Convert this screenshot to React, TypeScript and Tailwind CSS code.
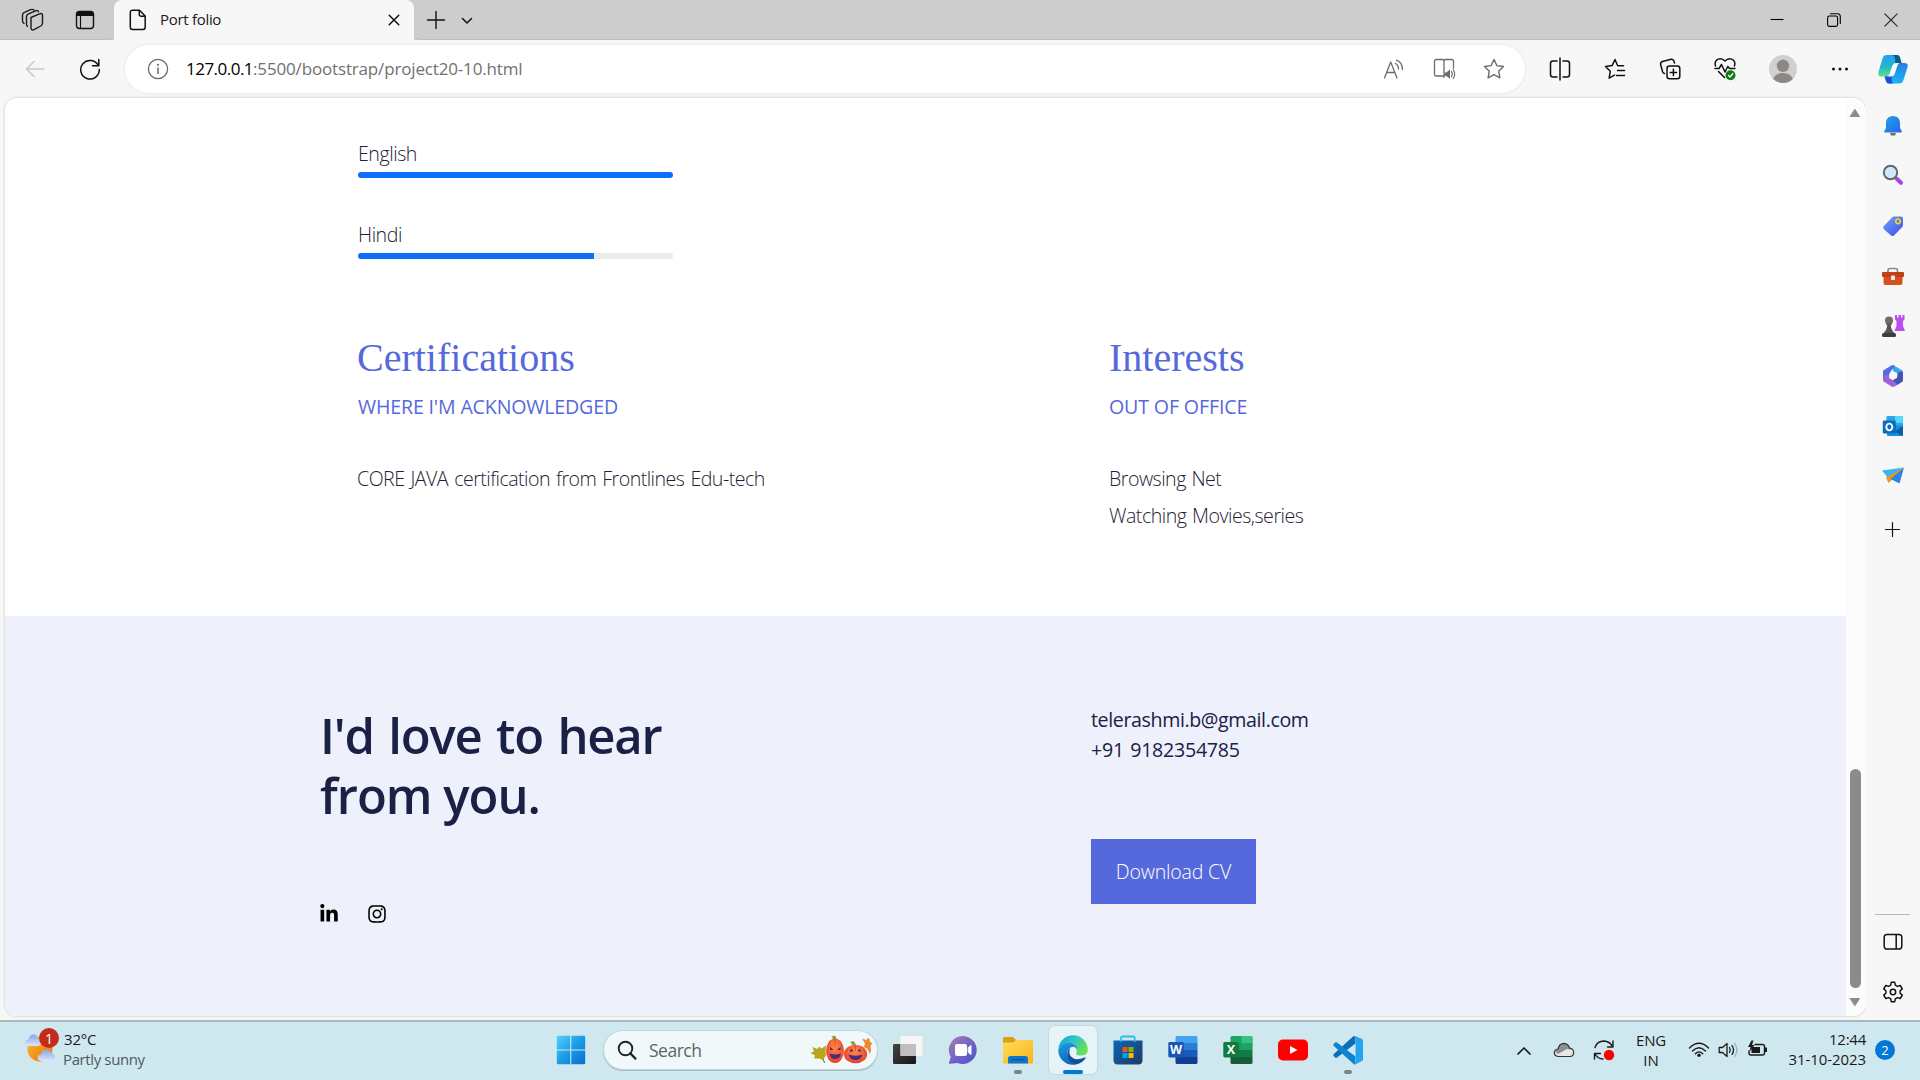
import React from "react";
import { FaInstagram, FaLinkedinIn } from "react-icons/fa";

type SvgProps = { w: number; h: number; className?: string; children: React.ReactNode };

/* Drawing surface whose user units equal CSS pixels. */
function Svg({ w, h, className = "", children }: SvgProps) {
  return (
    <svg
      width={w}
      height={h}
      viewBox={`0 0 ${w} ${h}`}
      fill="none"
      stroke="none"
      strokeLinecap="round"
      strokeLinejoin="round"
      className={"block shrink-0 " + className}
    >
      {children}
    </svg>
  );
}

/* ---------- Browser chrome ---------- */

function TabStrip() {
  return (
    <div className="flex h-10 shrink-0 items-stretch bg-[#cdcdcd] text-black">
      <div className="flex h-10 w-[114px] items-center rounded-br-md border-b border-[#bdbdbd] pl-[21px]">
        <Svg w={24} h={24}>
          <g stroke="#1b1b1b" strokeWidth="1.4">
            <path d="M10 9.500 18.500 5.800Q21.500 4.600 21.500 7.600V15Q21.500 17 19.800 18L13 21.600Q10 22.800 10 19.800Z" />
            <path d="M6.500 18.400Q5.500 17.700 5.500 16V8.800Q5.500 7 7 6.200L14.500 2.800Q17 2 17.500 3.700" />
            <path d="M3 15.400Q1.500 14.600 1.500 12.800V7.200Q1.500 5.400 3 4.600L9.500 1.600Q12 .9 13 2" />
          </g>
        </Svg>
        <Svg w={20} h={20} className="ml-[30px]">
          <rect x="1.500" y="1.500" width="17" height="17" rx="3" stroke="#111" strokeWidth="1.400" />
          <path d="M1.500 6V4.500a3 3 0 0 1 3-3h11a3 3 0 0 1 3 3V6Z" fill="#111" />
          <path d="M5.500 6v12.500" stroke="#111" strokeWidth="1.200" />
        </Svg>
      </div>
      <div className="flex h-10 w-[300px] items-center rounded-t-lg bg-[#f7f7f7]">
        <Svg w={18} h={22} className="ml-[15px]">
          <path
            d="M3.500 1.200H10.500L16.200 7V18.200A2.200 2.200 0 0 1 14 20.400H3.500A2.200 2.200 0 0 1 1.300 18.200V3.400A2.200 2.200 0 0 1 3.500 1.200ZM10.300 1.200V5.500A1.700 1.700 0 0 0 12 7.200H16.200"
            stroke="#111"
            strokeWidth="1.500"
          />
        </Svg>
        <span className="-mt-[2px] ml-[13px] w-[228px] text-[15px] leading-5 tracking-[-0.3px] text-[#1a1a1a]">Port folio</span>
        <Svg w={12} h={12}>
          <path d="M1.200 1.200 10.800 10.800M10.800 1.200 1.200 10.800" stroke="#111" strokeWidth="1.500" />
        </Svg>
      </div>
      <div className="flex h-10 flex-1 items-center rounded-bl-md border-b border-[#bdbdbd] pl-[12px]">
        <Svg w={20} h={20}>
          <path d="M10 1.500V18.500M1.500 10H18.500" stroke="#111" strokeWidth="1.400" />
        </Svg>
        <Svg w={12} h={8} className="mt-[2px] ml-[15px]">
          <path d="M1.500 1.500 6 6 10.500 1.500" stroke="#111" strokeWidth="1.500" />
        </Svg>
        <div className="flex-1" />
        <Svg w={14} h={14} className="mr-[43px]">
          <path d="M.5 6.500H13.500" stroke="#000" strokeWidth="1.100" strokeLinecap="butt" />
        </Svg>
        <Svg w={14} h={14} className="mr-[43px]">
          <rect x=".6" y="3" width="10" height="10.400" rx="1.800" stroke="#000" strokeWidth="1.100" />
          <path d="M3.500 .8H10.500Q13.300 .8 13.300 3.600V10.500" stroke="#000" strokeWidth="1.100" />
        </Svg>
        <Svg w={14} h={14} className="mr-[22px]">
          <path d="M.8 .8 13.200 13.200M13.200 .8 .8 13.200" stroke="#222" strokeWidth="1.100" />
        </Svg>
      </div>
    </div>
  );
}

function Cell({ className, children }: { className: string; children: React.ReactNode }) {
  return <div className={"flex shrink-0 items-center justify-center " + className}>{children}</div>;
}

function CopilotLogo() {
  return (
    <Svg w={30} h={30}>
      <defs>
        <linearGradient id="cpA" x1="0" y1="0" x2="0" y2="1">
          <stop offset="0" stopColor="#2a9ff0" />
          <stop offset=".55" stopColor="#22b8c9" />
          <stop offset="1" stopColor="#5fe08a" />
        </linearGradient>
        <linearGradient id="cpB" x1="0" y1="0" x2="0" y2="1">
          <stop offset="0" stopColor="#2a7de8" />
          <stop offset="1" stopColor="#1bb7f3" />
        </linearGradient>
      </defs>
      <path d="M8.500 1H19Q21 1 21.800 3L23.500 9H16.500L12 19.500Q11 22.500 8 22.500H3.500Q-.8 22.500 .6 17.500L4.500 4.500Q5.500 1 8.500 1Z" fill="url(#cpA)" />
      <path d="M14 1H19Q21 1 21.800 3L23.500 9H17Q18 1.500 14 1Z" fill="#0b5c8f" />
      <path d="M21.500 29.500H11Q8.500 29.500 8 27L6.500 22.500H10.500Q13 22 14 19L17.500 9H26.500Q30.800 9 29.400 13.500L25.500 26Q24.500 29.500 21.500 29.500Z" fill="url(#cpB)" />
      <path d="M6.500 22.500H10.500Q13 22 14 19.500Q13 27 15 29.500H11Q8.500 29.500 8 27Z" fill="#1d4fd8" />
      <path d="M19.500 9Q15 9 14 12.500L11.500 20.500Q11 22 10 22.500H12.500Q16 22.500 17 19L19.500 11.500Q20 9.500 21.500 9Z" fill="#f4fbff" />
    </Svg>
  );
}

function Toolbar() {
  return (
    <div className="flex h-[57px] shrink-0 items-center bg-[#f7f7f7]">
      <Svg w={20} h={18} className="ml-[25px]">
        <path d="M19 9H1.500M9 1.500 1.500 9 9 16.500" stroke="#c6c6c6" strokeWidth="1.400" />
      </Svg>
      <Svg w={22} h={22} className="ml-[34px]">
        <path d="M19.300 7.500A9.300 9.300 0 1 0 20.300 11.500M19.800 1.500V7.800H13.500" stroke="#111" strokeWidth="1.500" />
      </Svg>
      <div className="ml-[24px] flex h-[48px] w-[1400px] shrink-0 items-center rounded-full bg-white shadow-[0_0_3px_rgba(0,0,0,0.10)]">
        <Svg w={22} h={22} className="ml-[22px]">
          <circle cx="11" cy="11" r="9.600" stroke="#6b6b6b" strokeWidth="1.300" />
          <path d="M11 10V15.500" stroke="#6b6b6b" strokeWidth="1.500" />
          <circle cx="11" cy="6.800" r="1.100" fill="#6b6b6b" />
        </Svg>
        <div className="ml-[17px] flex-1 whitespace-nowrap text-[17px] leading-6">
          <span className="tracking-[-0.52px] text-black">127.0.0.1</span>
          <span className="tracking-[-0.16px] text-[#707070]">:5500/bootstrap/project20-10.html</span>
        </div>
        <Cell className="w-[50px]">
          <Svg w={22} h={20}>
            <g stroke="#6b6b6b" strokeWidth="1.300">
              <path d="M1.500 19 7.700 3 14 19M3.600 13.500H11.900" />
              <path d="M12.500 4.500Q15.500 6 15.500 10M13.500 1.200Q19.500 3.500 19.500 10.500" />
            </g>
          </Svg>
        </Cell>
        <Cell className="w-[50px]">
          <Svg w={23} h={22}>
            <path d="M11 18H3.200A1.700 1.700 0 0 1 1.500 16.300V3.200A1.700 1.700 0 0 1 3.200 1.500H9.500Q11 1.500 11 3.200V19.500M11 3.200Q11 1.500 12.700 1.500H18.800A1.700 1.700 0 0 1 20.500 3.200V10" stroke="#6b6b6b" strokeWidth="1.300" />
            <path d="M11.500 14.500H13.300L17 11.500V20.800L13.300 18H11.500Z" fill="#6b6b6b" />
            <path d="M18.500 13.500Q19.800 16 18.500 18.700M20.300 11.700Q23 16 20.300 20.500" stroke="#6b6b6b" strokeWidth="1.200" />
          </Svg>
        </Cell>
        <Cell className="mr-[6px] w-[50px]">
          <Svg w={22} h={22}>
            <path d="M11 1.500 13.900 7.600 20.500 8.500 15.700 13.200 16.900 19.900 11 16.700 5.100 19.900 6.300 13.200 1.500 8.500 8.100 7.600Z" stroke="#6b6b6b" strokeWidth="1.400" />
          </Svg>
        </Cell>
      </div>
      <Cell className="ml-[7px] w-[55px]">
        <Svg w={22} h={24}>
          <path d="M8 4H4A2.500 2.500 0 0 0 1.500 6.500V17.500A2.500 2.500 0 0 0 4 20H8M14 4H18A2.500 2.500 0 0 1 20.500 6.500V17.500A2.500 2.500 0 0 1 18 20H14M11 1V23" stroke="#111" strokeWidth="1.500" />
        </Svg>
      </Cell>
      <Cell className="w-[55px]">
        <Svg w={22} h={22}>
          <path d="M19.500 7.800H13.700L11 1.500 8.100 7.600 1.500 8.500 6.300 13.200 5.100 20.200 10.500 17.200M13.500 12.500H20.500M12.500 17.500H20.500" stroke="#111" strokeWidth="1.500" />
        </Svg>
      </Cell>
      <Cell className="w-[55px]">
        <Svg w={22} h={22}>
          <g stroke="#111" strokeWidth="1.500">
            <rect x="8" y="8" width="12.800" height="12.800" rx="2.500" />
            <path d="M14.400 11.200V17.600M11.200 14.400H17.600" />
            <path d="M15.500 5 14.800 2.800Q14 1 12 1.300L3.500 3.500Q1.300 4.200 1.600 6.500L3.700 14Q4.200 15.200 5.500 15.500" />
          </g>
        </Svg>
      </Cell>
      <Cell className="w-[55px]">
        <Svg w={22} h={24}>
          <path d="M1.600 9Q.3 5.500 2.500 3.200Q6.800-.2 11 4Q15.200-.2 19.500 3.200Q21.700 5.500 20.400 9M1 11.500H5L7.500 7.500 11 15 13.800 9.500 15.500 11.500H21M4.500 14.500 10.500 20.500" stroke="#111" strokeWidth="1.500" />
          <circle cx="16.500" cy="18.300" r="5" fill="#107c10" />
          <path d="M14.500 18.500 16 20 18.800 16.800" stroke="#fff" strokeWidth="1.300" />
        </Svg>
      </Cell>
      <Cell className="w-[62px]">
        <Svg w={28} h={28}>
          <defs>
            <clipPath id="avatar">
              <circle cx="14" cy="14" r="14" />
            </clipPath>
          </defs>
          <circle cx="14" cy="14" r="14" fill="#d2d0ce" />
          <g clipPath="url(#avatar)" fill="#8c8885">
            <circle cx="14" cy="10.800" r="6.200" />
            <ellipse cx="14" cy="25.500" rx="10" ry="7.500" />
          </g>
        </Svg>
      </Cell>
      <Cell className="w-[52px]">
        <Svg w={18} h={4}>
          <g fill="#111">
            <circle cx="2.500" cy="2" r="1.500" />
            <circle cx="9" cy="2" r="1.500" />
            <circle cx="15.500" cy="2" r="1.500" />
          </g>
        </Svg>
      </Cell>
      <Cell className="w-[54px]">
        <CopilotLogo />
      </Cell>
    </div>
  );
}

/* ---------- Portfolio page ---------- */

function Language({ name, level }: { name: string; level: number }) {
  return (
    <div className="flex w-[315px] flex-col">
      <span className="text-[19.6px] leading-[30px] font-light tracking-[-0.45px] text-[#1f2235]">{name}</span>
      <div className="mt-[3px] h-[6px] overflow-hidden rounded-full bg-[#e9ecef]">
        <div className="h-full bg-[#0d6efd]" style={{ width: `${level}%` }} />
      </div>
    </div>
  );
}

function Page() {
  return (
    <div className="flex w-[1841px] flex-col bg-white">
      <div className="flex h-[518px] flex-col pt-[41px] pl-[353px]">
        <Language name="English" level={100} />
        <div className="h-[42px]" />
        <Language name="Hindi" level={75} />
        <div className="mt-[75px] flex">
          <section className="w-[751px]">
            <h2 className="-ml-px font-['Liberation_Serif',serif] text-[40px] leading-[48px] text-[#5569dc]">Certifications</h2>
            <p className="mt-[10px] text-[19.6px] leading-[30px] tracking-[-0.16px] text-[#5569dc]">WHERE I'M ACKNOWLEDGED</p>
            <p className="mt-[38px] -ml-px text-[19.6px] leading-[37px] font-light tracking-[-0.53px] text-[#1f2235] [word-spacing:1.5px]">
              CORE JAVA certification from Frontlines Edu-tech
            </p>
          </section>
          <section>
            <h2 className="font-['Liberation_Serif',serif] text-[40px] leading-[48px] text-[#5569dc]">Interests</h2>
            <p className="mt-[10px] text-[19.6px] leading-[30px] tracking-[-0.14px] text-[#5569dc]">OUT OF OFFICE</p>
            <p className="mt-[38px] text-[19.6px] leading-[37px] font-light tracking-[-0.5px] text-[#1f2235] [word-spacing:1px]">Browsing Net</p>
            <p className="text-[19.6px] leading-[37px] font-light tracking-[-0.5px] text-[#1f2235] [word-spacing:1px]">Watching Movies,series</p>
          </section>
        </div>
      </div>
      <footer className="flex flex-1 bg-[#eef0fb] text-[#1b2045]">
        <div className="w-[1086px] pt-[89px] pl-[315px]">
          <h1 className="text-[49px] leading-[60px] font-semibold">
            <span className="block tracking-[-1.2px] [word-spacing:3px]">I'd love to hear</span>
            <span className="block tracking-[-1px]">from you.</span>
          </h1>
          <div className="mt-[79px] -ml-px flex items-center gap-[28px] text-black">
            <FaLinkedinIn size={20} />
            <FaInstagram size={20} />
          </div>
        </div>
        <div className="flex flex-col items-start pt-[89px] whitespace-nowrap">
          <span className="text-[19.6px] leading-[30px] tracking-[-0.38px]">telerashmi.b@gmail.com</span>
          <span className="text-[19.6px] leading-[30px] tracking-[-0.25px] [word-spacing:1.5px]">+91 9182354785</span>
          <button className="mt-[74px] h-[65px] w-[165px] bg-[#5569dc] text-[19.6px] font-light tracking-[-0.2px] text-white">
            Download CV
          </button>
        </div>
      </footer>
    </div>
  );
}

function ScrollBar() {
  return (
    <div className="flex flex-1 flex-col items-center bg-[#fcfcfc] pr-px">
      <Svg w={12} h={10} className="mt-[10px]">
        <path d="M6 1.500 10.500 8.500H1.500Z" fill="#8b8b8b" stroke="#8b8b8b" />
      </Svg>
      <div className="mt-[651px] h-[219px] w-[11px] rounded-full bg-[#8b8b8b]" />
      <Svg w={12} h={10} className="mt-[9px]">
        <path d="M6 8.500 10.500 1.500H1.500Z" fill="#8b8b8b" stroke="#8b8b8b" />
      </Svg>
    </div>
  );
}

/* ---------- Edge sidebar ---------- */

function SideBar() {
  return (
    <aside className="flex w-[55px] shrink-0 flex-col items-center bg-[#f7f7f7]">
      <Cell className="mt-[4px] h-[49px]">
        <Svg w={20} h={22}>
          <defs>
            <linearGradient id="bell" x1="0" y1="0" x2="1" y2="1">
              <stop offset="0" stopColor="#18a5e8" />
              <stop offset="1" stopColor="#2f63f0" />
            </linearGradient>
          </defs>
          <path d="M7 18H13L12 20.500H8Z" fill="#6f6f6f" />
          <path d="M10 1C14.500 1 17 4 17 8V13L18.800 16.300Q19 17.500 17.800 17.500H2.200Q1 17.500 1.200 16.300L3 13V8C3 4 5.500 1 10 1Z" fill="url(#bell)" />
        </Svg>
      </Cell>
      <Cell className="h-[49px]">
        <Svg w={22} h={22}>
          <path d="M14.500 14.500 19 18.800" stroke="#b23af0" strokeWidth="4" />
          <path d="M12 12 14.500 14.500" stroke="#777" strokeWidth="2" />
          <circle cx="8.500" cy="8.500" r="6.700" fill="#cfe9fb" stroke="#666" strokeWidth="2" />
        </Svg>
      </Cell>
      <Cell className="h-[53px]">
        <Svg w={22} h={22}>
          <defs>
            <linearGradient id="tag" x1="0" y1="0" x2="1" y2="1">
              <stop offset="0" stopColor="#6fa5ff" />
              <stop offset="1" stopColor="#3d4be6" />
            </linearGradient>
          </defs>
          <path d="M12 1.500H19Q21 1.500 21 3.500V10Q21 11 20.200 12L12 20.500Q10.500 21.700 9 20.500L1.700 14Q.5 12.500 1.700 11.200L10 2.400Q11 1.500 12 1.500Z" fill="url(#tag)" />
          <circle cx="16" cy="6.300" r="2.300" stroke="#f5d327" strokeWidth="1.600" />
        </Svg>
      </Cell>
      <Cell className="h-[49px]">
        <Svg w={24} h={20}>
          <path d="M7 5V3.500Q7 1.500 9 1.500H14.500Q16.500 1.500 16.500 3.500V5" stroke="#8a8a8a" strokeWidth="1.700" />
          <path d="M2.500 9H21.500V16Q21.500 18 19.500 18H4.500Q2.500 18 2.500 16Z" fill="#d4501e" />
          <path d="M2 5H22Q23 5 23 6V9Q23 10 22 10H2Q1 10 1 9V6Q1 5 2 5Z" fill="#c23f14" />
          <rect x="10" y="8.500" width="4" height="4.500" rx=".8" fill="#e8e8e8" />
        </Svg>
      </Cell>
      <Cell className="h-[50px]">
        <Svg w={24} h={24}>
          <path d="M14 1H16V3.500H17.500V1H20V3.500H21.500V1H23.500V5.500L22 7V12L24 17H13.500L15.500 12V7L14 5.500Z" fill="#bb4df2" />
          <circle cx="8" cy="6.500" r="4" fill="#6d6d6d" />
          <path d="M5 9.500H11L10.500 11H9.800Q10 16 13 18.500V20H3V18.500Q6 16 6.200 11H5.500Z" fill="#555" />
          <rect x="1" y="19" width="14" height="4" rx="1.500" fill="#3e3e3e" />
        </Svg>
      </Cell>
      <Cell className="h-[50px]">
        <Svg w={22} h={24}>
          <path d="M11 1 20.500 6.500V13L16 15.500 15.500 9.500 11 7Z" fill="#38a8ec" />
          <path d="M11 1 13 2 8 8.500 6.500 17 2.500 18Q1 17 1 15.500V7.500Q1 6.500 2 6L9 1.800Q10 1 11 1Z" fill="#4d6fe0" />
          <path d="M1 12 7.500 10V14L13 17.500 16 20.500 12.500 22.600Q11 23.300 9.500 22.600L2.500 18Q1 17 1 15.500Z" fill="#9a63d8" />
          <path d="M21 7.500V16Q21 17.500 20 18L15.500 20.800 10.500 16 15 13.500 16 8.500Z" fill="#4353b8" />
          <path d="M11 8 14.800 10V14L11 16 7.200 14V10Z" fill="#f7f7f7" />
        </Svg>
      </Cell>
      <Cell className="h-[50px]">
        <Svg w={22} h={22}>
          <rect x="4.500" y="1" width="16.500" height="14" rx="1.200" fill="#28a8ea" />
          <path d="M13 1H20A1 1 0 0 1 21 2V8H13Z" fill="#50d9ff" />
          <path d="M5 10 21 11V20A1 1 0 0 1 20 21H6A1 1 0 0 1 5 20Z" fill="#1490df" />
          <path d="M21 11 12.500 16.500 20.500 21Q21 20.500 21 20Z" fill="#0a5ea8" />
          <rect x=".8" y="5.500" width="13" height="13" rx="1.300" fill="#0f6cbd" />
          <ellipse cx="7.300" cy="12" rx="3" ry="3.400" stroke="#fff" strokeWidth="1.900" />
        </Svg>
      </Cell>
      <Cell className="h-[50px]">
        <Svg w={24} h={20}>
          <path d="M1 4.500 23 1.500 7 12Z" fill="#38b5f2" />
          <path d="M23 1.500 5 11.500 7.500 17 11 13.800Z" fill="#e79a14" />
          <path d="M23 1.500 18.500 17.500 9.500 13Z" fill="#2d82e8" />
        </Svg>
      </Cell>
      <Cell className="mt-px h-[54px]">
        <Svg w={17} h={17}>
          <path d="M8.500 1.500V15.500M1.500 8.500H15.500" stroke="#111" strokeWidth="1.200" />
        </Svg>
      </Cell>
      <div className="mt-[358px] h-px w-[35px] bg-[#b9b9b9]" />
      <Svg w={20} h={18} className="mt-[18px]">
        <path d="M4 1.500H16A2.600 2.600 0 0 1 18.800 4V13.500A2.600 2.600 0 0 1 16 16H4A2.600 2.600 0 0 1 1.200 13.500V4A2.600 2.600 0 0 1 4 1.500ZM13.200 1.500V16" stroke="#111" strokeWidth="1.500" />
      </Svg>
      <Svg w={22} h={22} className="mt-[30px]">
        <path
          d="M9.300 1.300H12.700L13.300 4.200 15.400 5.400 18.200 4.500 20.300 7.900 18.100 9.800V12.200L20.300 14.100 18.200 17.500 15.400 16.600 13.300 17.800 12.700 20.700H9.300L8.700 17.800 6.600 16.600 3.800 17.500 1.700 14.100 3.900 12.200V9.800L1.700 7.900 3.800 4.500 6.600 5.400 8.700 4.200Z"
          stroke="#111"
          strokeWidth="1.500"
        />
        <circle cx="11" cy="11" r="2.700" stroke="#111" strokeWidth="1.500" />
      </Svg>
    </aside>
  );
}

/* ---------- Taskbar ---------- */

function TaskCell({ mark, active, children }: { mark?: "dot" | "bar"; active?: boolean; children: React.ReactNode }) {
  return (
    <div className="flex w-[55px] shrink-0 justify-center">
      <div
        className={
          "flex h-[48px] w-[48px] flex-col items-center rounded-md pt-[9px] " +
          (active ? "bg-[#e6f3f8] shadow-[0_0_1px_1px_rgba(140,170,180,0.22)]" : "")
        }
      >
        <div className="flex h-[30px] items-center">{children}</div>
        {mark === "dot" && <div className="mt-[5px] h-[4px] w-[8px] rounded-full bg-[#7b8589]" />}
        {mark === "bar" && <div className="mt-[5px] h-[4px] w-[20px] rounded-full bg-[#0078d4]" />}
      </div>
    </div>
  );
}

function Pumpkins() {
  return (
    <Svg w={63} h={32}>
      <defs>
        <radialGradient id="pk" cx=".5" cy=".35" r=".7">
          <stop offset="0" stopColor="#ff8a4a" />
          <stop offset=".7" stopColor="#f0542d" />
          <stop offset="1" stopColor="#d63a35" />
        </radialGradient>
      </defs>
      <path d="M12 23 14.500 28.500" stroke="#9b7a16" strokeWidth="1.200" />
      <path d="M13 26 9 24.500 4 24.500 5 21.500 .5 19 4 17.500 2.500 13 7.500 15 9 12.500 11.500 14.500 16 11.500 15.500 17 16 21Z" fill="#b9a51b" />
      <path d="M23 6Q23 4 21.500 2.500L25 1.500Q27 4 26.500 7Z" fill="#6fae3e" />
      <ellipse cx="25" cy="16.800" rx="9" ry="12.200" fill="url(#pk)" />
      <path d="M42 11Q42 9.500 40 8L43.500 7Q45.500 8.500 46 12Z" fill="#6fae3e" />
      <ellipse cx="45.500" cy="20" rx="11.700" ry="9.300" fill="url(#pk)" />
      <path d="M25 5V13M20 7Q17.500 11 17.500 16M30 7Q32.500 11 32.500 16M45.500 11V17M39 12.500Q36 16 36 21M52 12.500Q55 16 55 21" stroke="#dc4a2c" strokeWidth=".8" />
      <path d="M20 13 23.500 16H20ZM30.500 13 27 16H30.500ZM19.500 19.500Q25 21.500 31 19.500Q30 25 25 25Q20.500 25 19.500 19.500ZM39.500 17.500 41.500 14.500 43.500 17.500ZM51.500 17.500 49.500 14.500 47.500 17.500ZM38.500 20.500Q45.500 23 52.500 20.500Q51 26 45.500 26Q40 26 38.500 20.500Z" fill="#4b2a7a" />
      <path d="M52 4.500 56 6 59 3.500 60 8 62.500 9 60.500 12 61 16 60 20 57.500 15 54 13 55 9.500Z" fill="#f08a2c" />
    </Svg>
  );
}

function OfficeLogo({ letter, colors, plate }: { letter: string; colors: string[]; plate: string }) {
  return (
    <Svg w={30} h={30}>
      <defs>
        <clipPath id={"sheet" + letter}>
          <rect x="7.500" y="1" width="22" height="28" rx="1.600" />
        </clipPath>
      </defs>
      <g clipPath={`url(#sheet${letter})`}>
        <rect x="7" y="1" width="23" height="7" fill={colors[0]} />
        <rect x="7" y="8" width="23" height="7" fill={colors[1]} />
        <rect x="7" y="15" width="23" height="7" fill={colors[2]} />
        <rect x="7" y="22" width="23" height="7" fill={colors[3]} />
        {colors[4] && <rect x="18.500" y="1" width="11" height="7" fill={colors[4]} />}
        {colors[5] && <rect x="18.500" y="8" width="11" height="7" fill={colors[5]} />}
      </g>
      <rect x=".3" y="7" width="15.500" height="15.500" rx="1.400" fill={plate} />
      <text x="8" y="19.200" textAnchor="middle" fill="#fff" className="font-['Open_Sans',sans-serif] text-[12.5px] font-bold">
        {letter}
      </text>
    </Svg>
  );
}

function TaskBar() {
  return (
    <div className="flex h-[60px] shrink-0 border-t-2 border-[#a9b9be] bg-[#cfe8ef]">
      <div className="flex w-[543px] items-start pt-[5px] pl-[24px]">
        <div className="relative">
          <Svg w={36} h={38}>
            <defs>
              <linearGradient id="sun" x1="0" y1="0" x2="1" y2="1">
                <stop offset="0" stopColor="#f6bb2a" />
                <stop offset="1" stopColor="#f1700f" />
              </linearGradient>
              <linearGradient id="cloud" x1="0" y1="0" x2="0" y2="1">
                <stop offset="0" stopColor="#88a5e2" />
                <stop offset="1" stopColor="#d9e7fa" />
              </linearGradient>
            </defs>
            <circle cx="16" cy="22" r="12.500" fill="url(#sun)" />
            <path d="M4.500 19Q1 18.500 1 15.500Q1.300 12.500 4.500 12.500Q5.500 7.500 9.500 7.500Q13 7.500 14 11.500Q17 12 17 15.500Q17 18.500 14 19Z" fill="url(#cloud)" />
            <path d="M17 34Q13.500 33.500 13.500 30.500Q13.500 27.500 17 27.500Q18.500 22.500 22.500 22.500Q26.500 22.800 27.500 26.500Q31 27 31 30.500Q31 33.500 28 34Z" fill="url(#cloud)" />
          </Svg>
          <span className="absolute top-[1px] left-[15px] flex h-5 w-5 items-center justify-center rounded-full bg-[#c42b1c] text-[14px] text-white">
            1
          </span>
        </div>
        <div className="ml-[4px] flex flex-col whitespace-nowrap text-[15px] leading-5">
          <span className="mt-[2px] tracking-[-0.2px] text-[#1a1a1a]">32°C</span>
          <span className="-ml-px tracking-[-0.38px] text-[#4d5a5e]">Partly sunny</span>
        </div>
      </div>
      <div className="flex items-start pt-[4px]">
        <TaskCell>
          <Svg w={30} h={30}>
            <defs>
              <linearGradient id="win" x1="0" y1="0" x2="1" y2="1">
                <stop offset="0" stopColor="#51d3fc" />
                <stop offset=".5" stopColor="#1a9be6" />
                <stop offset="1" stopColor="#0470cf" />
              </linearGradient>
            </defs>
            <path d="M1.500 .8H14.200V14.400H.8V1.500ZM15.300 .8H28.500L29.200 1.500V14.400H15.300ZM.8 15.500H14.200V29.200H1.500L.8 28.500ZM15.300 15.500H29.200V28.500L28.500 29.200H15.300Z" fill="url(#win)" />
          </Svg>
        </TaskCell>
        <div className="mt-[5px] mr-[3px] ml-[6px] flex h-[38px] w-[273px] items-center rounded-full bg-[#f0f8fa] shadow-[0_0_0_1px_#bfd6dd,0_1px_0_1px_#a3bcc4]">
          <Svg w={20} h={20} className="ml-[13px]">
            <circle cx="8.500" cy="8.500" r="6.800" stroke="#222" strokeWidth="1.900" />
            <path d="M13.500 13.500 18.300 18.500" stroke="#222" strokeWidth="2.500" />
          </Svg>
          <span className="ml-[12px] flex-1 text-[17.5px] leading-6 tracking-[-0.5px] text-[#5c6467]">Search</span>
          <Pumpkins />
          <div className="w-[4px]" />
        </div>
        <TaskCell>
          <Svg w={30} h={30}>
            <defs>
              <linearGradient id="tv" x1="0" y1="0" x2="1" y2="1">
                <stop offset="0" stopColor="#444" />
                <stop offset="1" stopColor="#161616" />
              </linearGradient>
            </defs>
            <rect x="0" y="9" width="23" height="20" rx="1.200" fill="url(#tv)" />
            <rect x="7.500" y="1" width="22" height="20" rx="1.200" fill="#f6f6f6" />
            <rect x="7.500" y="9" width="15.500" height="12" fill="#bfbfbf" />
          </Svg>
        </TaskCell>
        <TaskCell>
          <Svg w={30} h={30}>
            <defs>
              <linearGradient id="chat" x1="0" y1="0" x2="1" y2="1">
                <stop offset="0" stopColor="#a67fae" />
                <stop offset=".6" stopColor="#6a5fca" />
                <stop offset="1" stopColor="#4a54c4" />
              </linearGradient>
            </defs>
            <path d="M15 1A14 14 0 1 1 9.500 28L2 28.800Q.7 28.700 1 27.500L2.800 22A14 14 0 0 1 15 1Z" fill="url(#chat)" />
            <rect x="7" y="9" width="12" height="12" rx="2" fill="#fff" />
            <path d="M20.500 12.500 23 10.500V19.500L20.500 17.500Z" fill="#fff" stroke="#fff" />
          </Svg>
        </TaskCell>
        <TaskCell mark="dot">
          <Svg w={30} h={30}>
            <defs>
              <linearGradient id="fold" x1="0" y1="0" x2="1" y2="1">
                <stop offset="0" stopColor="#ffdc5f" />
                <stop offset="1" stopColor="#fbb414" />
              </linearGradient>
            </defs>
            <path d="M0 3.500Q0 2 1.500 2H10L13 5H28.500Q30 5 30 6.500V10H0Z" fill="#dd9f0a" />
            <path d="M0 9Q0 7.500 1.500 7.500H10L13 5H28.500Q30 5 30 6.500V27Q30 28.500 28.500 28.500H1.500Q0 28.500 0 27Z" fill="url(#fold)" />
            <path d="M5 28.500V23.500Q5 21 7.500 21H22.500Q25 21 25 23.500V28.500Z" fill="#0f74cc" />
            <path d="M9 24.700H21" stroke="#07519b" strokeWidth="1.300" />
          </Svg>
        </TaskCell>
        <TaskCell mark="bar" active>
          <Svg w={30} h={30}>
            <defs>
              <linearGradient id="eg1" x1="0" y1="0" x2="1" y2=".45">
                <stop offset="0" stopColor="#1aa5d6" />
                <stop offset=".55" stopColor="#30c5c7" />
                <stop offset="1" stopColor="#66e05a" />
              </linearGradient>
              <linearGradient id="eg2" x1="0" y1="0" x2=".4" y2="1">
                <stop offset="0" stopColor="#1b9de2" />
                <stop offset="1" stopColor="#0b6cbd" />
              </linearGradient>
            </defs>
            <path d="M.4 13.500A14.700 14.700 0 0 1 29.700 14Q30 20.500 23.500 20.500Q18 20.500 18 18.500Q19.500 17 18.500 14.500Q16.500 9.500 10 9.500Q3.500 9.500 .4 13.500Z" fill="url(#eg1)" />
            <path d="M.3 14.500Q3.500 8 10.500 8Q17 8 19 13.500Q16 10.500 12.500 12.500Q8.500 15 9.500 20.500Q11 27 18 29.400Q10 31 4.500 25.500Q0 21 .3 14.500Z" fill="url(#eg2)" />
            <path d="M12.500 12.500Q10 18 13 21.500Q17.500 26.500 26.500 22.500Q28 22 27.500 23.200Q24.500 28 18 29.500Q11 28 9.500 21.500Q8.500 15.500 12.500 12.500Z" fill="#124f9c" />
          </Svg>
        </TaskCell>
        <TaskCell>
          <Svg w={30} h={30}>
            <defs>
              <linearGradient id="store" x1="0" y1="0" x2="1" y2="1">
                <stop offset="0" stopColor="#0a67b8" />
                <stop offset="1" stopColor="#233865" />
              </linearGradient>
            </defs>
            <path d="M.5 5.500H29.500V25Q29.500 29.500 25 29.500H5Q.5 29.500 .5 25Z" fill="url(#store)" />
            <path d="M8 6V3.200Q8 1.500 9.700 1.500H20Q21.700 1.500 21.700 3.200V6" stroke="#2bbdf2" strokeWidth="1.800" />
            <path d="M9.500 12H14.500V17H9.500Z" fill="#f25022" />
            <path d="M15.500 12H20.500V17H15.500Z" fill="#7fba00" />
            <path d="M9.500 18H14.500V23H9.500Z" fill="#00a4ef" />
            <path d="M15.500 18H20.500V23H15.500Z" fill="#ffb900" />
          </Svg>
        </TaskCell>
        <TaskCell>
          <OfficeLogo letter="W" colors={["#41a5ee", "#2b7cd3", "#185abd", "#103f91"]} plate="#1a56b4" />
        </TaskCell>
        <TaskCell>
          <OfficeLogo letter="X" colors={["#21a366", "#189b5c", "#107c41", "#185c37", "#33c481", "#21a366"]} plate="#127a40" />
        </TaskCell>
        <TaskCell>
          <Svg w={30} h={22}>
            <rect x="0" y=".5" width="30" height="21" rx="5" fill="#f00" />
            <path d="M12 7 19.500 11 12 15Z" fill="#fff" />
          </Svg>
        </TaskCell>
        <TaskCell mark="dot">
          <Svg w={30} h={30}>
            <path d="M22 1 22.500 8.500 4 22.500Q3 23 2.200 22.500L.6 21Q0 20 .8 19L20 1.500Q21 .7 22 1Z" fill="#0a6fb8" />
            <path d="M22 29.500 22.500 21.500 4 7.500Q3 7 2.200 7.500L.6 9Q0 10 .8 11L20 28.500Q21 29.500 22 29.500Z" fill="#0c85d0" />
            <path d="M22 1 29 4Q30 4.500 30 5.500V24.500Q30 25.500 29 26L22 29.500Q21 29.700 20 28.800 22.500 29 22.500 26.500V4Q22.500 1.500 20 1.500 21 .6 22 1Z" fill="#24a3f0" />
          </Svg>
        </TaskCell>
      </div>
      <div className="flex flex-1 items-start justify-end text-[15px] leading-5 text-[#1a1a1a]">
        <Svg w={16} h={10} className="mt-[24px]">
          <path d="M2 8 8 2 14 8" stroke="#1a1a1a" strokeWidth="1.700" />
        </Svg>
        <Svg w={22} h={16} className="mt-[20px] ml-[21px]">
          <path d="M5 14.500Q1.300 14 1.300 10.500Q1.500 7.300 5 7Q6.300 1.300 11 1.300Q15.300 1.500 16.500 6Q20.700 6.700 20.700 10.500Q20.500 14.300 17 14.500Z" fill="#e6e6e6" />
          <path d="M2 9.500Q3 7 5 7Q6.300 1.500 11 1.500Q15.300 1.500 16.500 6L20 8 14 7 5 12Z" fill="#8f8f8f" />
          <path d="M5 14.500Q1.300 14 1.300 10.500Q1.500 7.300 5 7Q6.300 1.300 11 1.300Q15.300 1.500 16.500 6Q20.700 6.700 20.700 10.500Q20.500 14.300 17 14.500Z" stroke="#333" strokeWidth="1.200" />
        </Svg>
        <Svg w={22} h={22} className="mt-[17px] ml-[18px]">
          <path d="M2 8.500Q4 2 11 2Q16.500 2.200 19.500 7.500M20 2V8H14.500M1.500 20V14.500H7.500M1.500 14.500Q4.500 19.800 10 20" stroke="#1a1a1a" strokeWidth="1.400" />
          <circle cx="16" cy="16" r="5.200" fill="#f00" />
        </Svg>
        <div className="mt-[8px] ml-[20px] flex w-[32px] flex-col items-center">
          <span className="tracking-[-0.18px]">ENG</span>
          <span>IN</span>
        </div>
        <Svg w={22} h={16} className="mt-[20px] ml-[21px]">
          <g stroke="#1a1a1a" strokeWidth="1.400">
            <path d="M1.500 6Q11-3.300 20.500 6M4.500 9Q11 2.500 17.500 9M7.300 11.700Q11 8 14.700 11.700" />
          </g>
          <circle cx="11" cy="13.300" r="1.700" fill="#1a1a1a" />
        </Svg>
        <Svg w={20} h={18} className="mt-[19px] ml-[8px]">
          <path d="M1.200 6.500H4.500L9 2.500V15.500L4.500 11.500H1.200Z" stroke="#1a1a1a" strokeWidth="1.300" />
          <path d="M11.500 6.500Q13 9 11.500 11.500M14 4.500Q17 9 14 13.500" stroke="#1a1a1a" strokeWidth="1.300" />
          <path d="M16.700 2.500Q21 9 16.700 15.500" stroke="#9fb0b5" strokeWidth="1.300" />
        </Svg>
        <Svg w={22} h={18} className="mt-[18px] ml-[9px]">
          <path d="M8 4.500H15.500A2 2 0 0 1 17.500 6.500V13A2 2 0 0 1 15.500 15H4A2 2 0 0 1 2 13V11" stroke="#1a1a1a" strokeWidth="1.400" />
          <rect x="4.500" y="7" width="8.500" height="6" fill="#1a1a1a" />
          <path d="M18 7.500H20V12H18Z" fill="#1a1a1a" />
          <path d="M4.500 .5 1 7H3.500L2.500 12 7.500 5H5L6.500 .5Z" fill="#1a1a1a" />
        </Svg>
        <div className="mt-[7px] ml-[18px] flex w-[79px] flex-col items-end">
          <span className="tracking-[-0.25px]">12:44</span>
          <span className="tracking-[-0.08px]">31-10-2023</span>
        </div>
        <span className="mt-[18px] mr-[25px] ml-[9px] flex h-5 w-5 items-center justify-center rounded-full bg-[#0078d4] text-[13px] text-white">
          2
        </span>
      </div>
    </div>
  );
}

export default function App() {
  return (
    <div className="flex h-[1080px] w-[1920px] flex-col overflow-hidden bg-[#f7f7f7] font-['Open_Sans',sans-serif]">
      <TabStrip />
      <Toolbar />
      <div className="flex h-[923px] shrink-0">
        <main className="mt-px ml-[5px] flex h-[918px] w-[1860px] shrink-0 overflow-hidden rounded-xl bg-white shadow-[0_0_2px_1px_rgba(0,0,0,0.11)]">
          <Page />
          <ScrollBar />
        </main>
        <SideBar />
      </div>
      <TaskBar />
    </div>
  );
}
